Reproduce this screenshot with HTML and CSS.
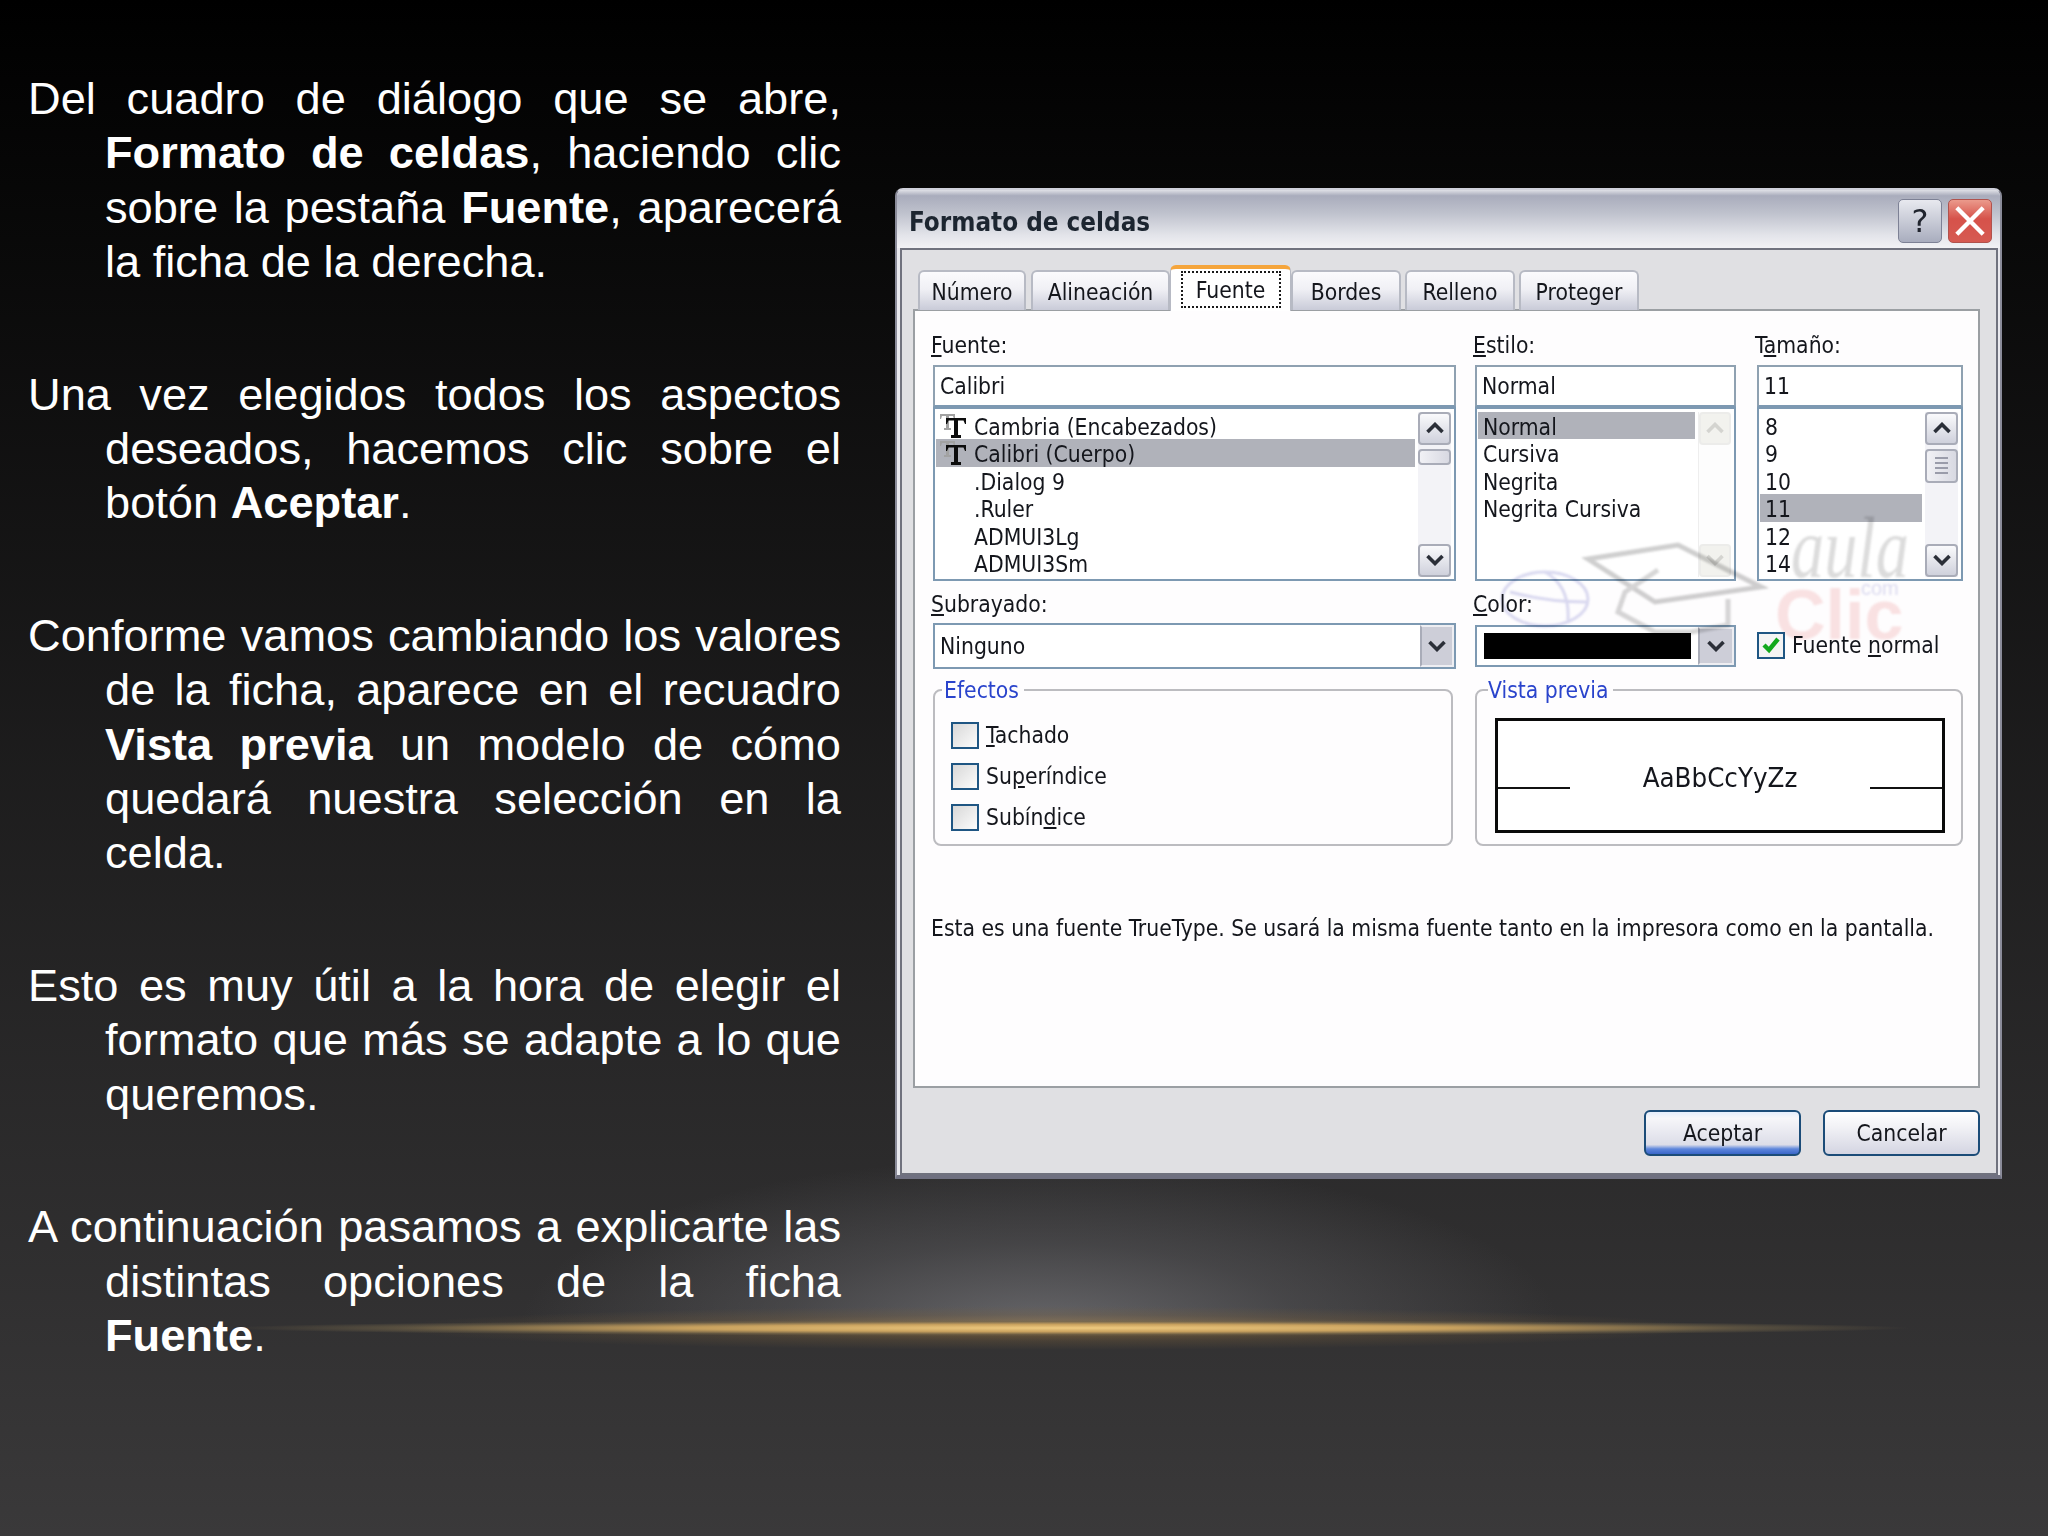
FILE: index.html
```html
<!DOCTYPE html>
<html lang="es">
<head>
<meta charset="utf-8">
<title>Formato de celdas</title>
<link rel="stylesheet" href="styles.css">
</head>
<body>
<svg class="defs" width="0" height="0" aria-hidden="true">
  <defs>
    <symbol id="chev-up" viewBox="0 0 18 12"><path d="M1.5 10 L9 2.5 L16.5 10" fill="none" stroke="currentColor" stroke-width="3.6"/></symbol>
    <symbol id="chev-down" viewBox="0 0 18 12"><path d="M1.5 2 L9 9.5 L16.5 2" fill="none" stroke="currentColor" stroke-width="3.6"/></symbol>
    <symbol id="tt" viewBox="0 0 27 30">
      <path d="M0 0 H15 V5 H14 L13 2 H9 V14 H11 V16 H4 V14 H6 V2 H2 L1 5 H0 Z" fill="#a2a2a2"/>
      <path d="M6 4 H26 V10 H25 L23.5 6.5 H18 V21 H21 V24 H11 V21 H14 V6.5 H8.5 L7 10 H6 Z" fill="#0c0c0c"/>
    </symbol>
  </defs>
</svg>
<main class="slide">
  <div class="glow-gray"></div>
  <div class="glow-halo"></div>
  <div class="glow-line"></div>

  <section class="copy">
    <p>Del cuadro de diálogo que se abre, <b>Formato de celdas</b>, haciendo clic sobre la pestaña <b>Fuente</b>, aparecerá la ficha de la derecha.</p>
    <p>Una vez elegidos todos los aspectos deseados, hacemos clic sobre el botón <b>Aceptar</b>.</p>
    <p>Conforme vamos cambiando los valores de la ficha, aparece en el recuadro <b>Vista previa</b> un modelo de cómo quedará nuestra selección en la celda.</p>
    <p>Esto es muy útil a la hora de elegir el formato que más se adapte a lo que queremos.</p>
    <p>A continuación pasamos a explicarte las distintas opciones de la ficha <b>Fuente</b>.</p>
  </section>

  <section class="dialog">
    <header class="titlebar">
      <h1 class="title">Formato de celdas</h1>
      <button class="cap cap-help">?</button>
      <button class="cap cap-close">
        <svg viewBox="0 0 30 30" width="36" height="36"><path d="M4 4 L26 26 M26 4 L4 26" stroke="#fff" stroke-width="3.6" fill="none"/></svg>
      </button>
    </header>

    <div class="client">
      <nav class="tabs">
        <span class="tab t-num">Número</span>
        <span class="tab t-ali">Alineación</span>
        <span class="tab tab-active"><span class="focus">Fuente</span></span>
        <span class="tab t-bor">Bordes</span>
        <span class="tab t-rel">Relleno</span>
        <span class="tab t-pro">Proteger</span>
      </nav>

      <div class="panel">
        <div class="grid">
          <div class="col">
            <label class="lbl"><u>F</u>uente:</label>
            <div class="input">Calibri</div>
            <div class="list">
              <ul class="items items-font">
                <li><svg class="tt"><use href="#tt"/></svg>Cambria (Encabezados)</li>
                <li class="sel"><svg class="tt"><use href="#tt"/></svg>Calibri (Cuerpo)</li>
                <li>.Dialog 9</li>
                <li>.Ruler</li>
                <li>ADMUI3Lg</li>
                <li>ADMUI3Sm</li>
              </ul>
              <div class="sb">
                <span class="sb-btn"><svg width="18" height="12"><use href="#chev-up"/></svg></span>
                <span class="sb-thumb sb-thumb-small"></span>
                <span class="sb-track"></span>
                <span class="sb-btn"><svg width="18" height="12"><use href="#chev-down"/></svg></span>
              </div>
            </div>
          </div>

          <div class="col">
            <label class="lbl"><u>E</u>stilo:</label>
            <div class="input">Normal</div>
            <div class="list">
              <ul class="items">
                <li class="sel">Normal</li>
                <li>Cursiva</li>
                <li>Negrita</li>
                <li>Negrita Cursiva</li>
              </ul>
              <div class="sb sb-off">
                <span class="sb-btn"><svg width="18" height="12"><use href="#chev-up"/></svg></span>
                <span class="sb-track"></span>
                <span class="sb-btn"><svg width="18" height="12"><use href="#chev-down"/></svg></span>
              </div>
            </div>
          </div>

          <div class="col">
            <label class="lbl">T<u>a</u>maño:</label>
            <div class="input">11</div>
            <div class="list">
              <ul class="items">
                <li>8</li>
                <li>9</li>
                <li>10</li>
                <li class="sel">11</li>
                <li>12</li>
                <li>14</li>
              </ul>
              <div class="sb">
                <span class="sb-btn"><svg width="18" height="12"><use href="#chev-up"/></svg></span>
                <span class="sb-thumb"><i></i><i></i><i></i><i></i></span>
                <span class="sb-track"></span>
                <span class="sb-btn"><svg width="18" height="12"><use href="#chev-down"/></svg></span>
              </div>
            </div>
          </div>

          <div class="col">
            <label class="lbl lbl2"><u>S</u>ubrayado:</label>
            <div class="select">
              <span class="select-text">Ninguno</span>
              <span class="drop"><svg width="18" height="12"><use href="#chev-down"/></svg></span>
            </div>
          </div>

          <div class="col">
            <label class="lbl lbl2"><u>C</u>olor:</label>
            <div class="select select-color">
              <span class="swatch"></span>
              <span class="drop"><svg width="18" height="12"><use href="#chev-down"/></svg></span>
            </div>
          </div>

          <div class="col col-end">
            <div class="check-row">
              <span class="box"><svg viewBox="0 0 20 20" width="20" height="20"><path d="M3 10 L8 15 L17 4" fill="none" stroke="#12a81c" stroke-width="4.4"/></svg></span>
              <span>Fuente <u>n</u>ormal</span>
            </div>
          </div>

          <fieldset class="group">
            <legend>Efectos</legend>
            <div class="check-row"><span class="box"></span><span><u>T</u>achado</span></div>
            <div class="check-row"><span class="box"></span><span>Su<u>p</u>eríndice</span></div>
            <div class="check-row"><span class="box"></span><span>Subín<u>d</u>ice</span></div>
          </fieldset>

          <fieldset class="group group-wide">
            <legend>Vista previa</legend>
            <div class="preview">
              <span class="rule"></span>
              <span class="sample">AaBbCcYyZz</span>
              <span class="rule"></span>
            </div>
          </fieldset>
        </div>

        <p class="note">Esta es una fuente TrueType. Se usará la misma fuente tanto en la impresora como en la pantalla.</p>

        <svg class="watermark" viewBox="0 0 340 150" width="340" height="150">
          <ellipse cx="47" cy="97" rx="43" ry="27" fill="none" stroke="#d9d9f0" stroke-width="3"/>
          <path d="M47 70 Q72 84 70 118 M12 90 Q50 100 88 100" fill="none" stroke="#d9d9f0" stroke-width="3"/>
          <path d="M90 57 L180 43 L263 85 L157 100 Z" fill="none" stroke="#cfcfcf" stroke-width="5"/>
          <path d="M160 68 L127 90 L120 110 L157 130 L193 130 L230 123 L230 97" fill="none" stroke="#d6d6d6" stroke-width="5"/>
          <text class="wm-aula" x="293" y="75" textLength="118" lengthAdjust="spacingAndGlyphs">aula</text>
          <text class="wm-clic" x="277" y="137">Clic</text>
          <text class="wm-com" x="363" y="93">com</text>
        </svg>
      </div>

      <div class="actions">
        <button class="btn btn-default">Aceptar</button>
        <button class="btn">Cancelar</button>
      </div>
    </div>
  </section>
</main>
</body>
</html>
```

FILE: styles.css
```css
* { box-sizing: border-box; }
html, body { margin: 0; padding: 0; }
body { width: 2048px; height: 1536px; overflow: hidden; background: #000; }
.defs { position: absolute; }

.slide {
  position: relative;
  width: 2048px;
  height: 1536px;
  overflow: hidden;
  display: flex;
  align-items: flex-start;
  padding-left: 28px;
  background: linear-gradient(180deg, #000 0%, #3a393a 100%);
  font-family: "Liberation Sans", Arial, sans-serif;
}

/* decorative horizon glow */
.glow-gray, .glow-halo, .glow-line { position: absolute; pointer-events: none; }
.glow-gray {
  left: 400px; top: 1150px; width: 1280px; height: 178px;
  background: radial-gradient(ellipse 520px 170px at 50% 100%, rgba(135,135,140,.62) 0%, rgba(120,120,125,.3) 50%, rgba(100,100,100,0) 100%);
}
.glow-halo {
  left: 300px; top: 1304px; width: 1500px; height: 48px;
  background: radial-gradient(ellipse 660px 22px at 50% 50%, rgba(170,130,70,.6) 0%, rgba(120,95,60,.3) 60%, rgba(80,70,50,0) 100%);
}
.glow-line {
  left: 220px; top: 1319px; width: 1700px; height: 18px;
  background: radial-gradient(ellipse 840px 8px at 50% 50%, #f0cb80 0%, #c9a25f 45%, rgba(120,105,75,.55) 80%, rgba(90,85,70,0) 100%);
}

/* left copy */
.copy {
  position: relative;
  width: 813px;
  flex: none;
  padding-top: 72px;
  color: #fff;
  font-size: 45.2px;
  line-height: 54.4px;
}
.copy p {
  margin: 0 0 78px;
  padding-left: 77px;
  text-indent: -77px;
  text-align: justify;
}
.copy b { font-weight: 700; }

/* dialog */
.dialog {
  position: relative;
  flex: none;
  width: 1107px;
  height: 991px;
  margin: 188px 0 0 54px;
  display: flex;
  flex-direction: column;
  background: #e9e9ee;
  border: 2px solid #8a8b99;
  border-top-color: #cfd0da;
  border-bottom: 4px solid #6f7080;
  border-radius: 8px 8px 0 0;
  font-family: "DejaVu Sans", "Noto Sans", sans-serif;
  font-stretch: condensed;
  font-size: 22.7px;
  color: #14161c;
  filter: blur(.45px);
}
.titlebar {
  flex: none;
  height: 58px;
  display: flex;
  align-items: flex-start;
  padding: 9px 8px 0 12px;
  background: linear-gradient(180deg, #dfe0e6 0%, #a9acbc 10%, #bfc2cd 40%, #e3e4ea 78%, #f2f2f5 100%);
  border-radius: 6px 6px 0 0;
}
.title {
  margin: 6px auto 0 0;
  font: 700 25.8px/34px "DejaVu Sans", sans-serif;
  font-stretch: condensed;
  color: #1c2530;
}
.cap {
  width: 44px;
  height: 44px;
  padding: 0;
  border: 1px solid #7d8195;
  border-radius: 5px;
  display: flex;
  align-items: center;
  justify-content: center;
}
.cap-help {
  margin-right: 6px;
  background: linear-gradient(180deg, #e8e9ef, #a9adbe);
  color: #20242e;
  font: 400 32px/1 "DejaVu Sans", sans-serif;
}
.cap-close {
  background: linear-gradient(180deg, #eb9a8c, #d6524a 45%, #d65a52);
  border-color: #b0524d;
}

.client {
  flex: 1;
  margin: 0 2px 0 3px;
  padding: 18.5px 16px 0 11px;
  background: #e0e0e3;
  border: 2px solid #70727e;
  display: flex;
  flex-direction: column;
}

.tabs { flex: none; display: flex; height: 41px; padding-left: 5px; align-items: flex-end; position: relative; z-index: 1; margin-bottom: -1px; }
.tab {
  height: 40px;
  display: flex;
  align-items: center;
  justify-content: center;
  padding-top: 3px;
  background: linear-gradient(180deg, #fbfbfd 0%, #f0f0f5 45%, #c9cbd8 100%);
  border: 2px solid #b7bac4;
  border-bottom: 0;
  border-radius: 6px 6px 0 0;
}
.t-num { width: 108px; margin-right: 5px; }
.t-ali { width: 139px; }
.t-bor { width: 110px; margin-right: 4px; }
.t-rel { width: 110px; margin-right: 4px; }
.t-pro { width: 120px; }
.tab-active {
  width: 121px;
  height: 46px;
  margin-bottom: -1px;
  padding-top: 0;
  background: #fff;
  border: 1px solid #b7bac4;
  border-top: 4px solid #f5a53c;
  border-bottom: 0;
}
.focus { width: 100px; height: 37px; display: flex; align-items: center; justify-content: center; border: 2px dotted #1a1a1a; }

.panel {
  position: relative;
  flex: none;
  height: 779.5px;
  padding: 22px 14px 0 18px;
  background: #fefdfe;
  border: 2px solid #9b9fa3;
}
.grid {
  display: grid;
  grid-template-columns: 523px 263px 206px;
  column-gap: 19px;
  grid-template-rows: 248px 88px auto;
}
.grid > :nth-child(3n+2) { margin-right: 2px; }
.col { display: flex; flex-direction: column; min-width: 0; }
.col-end { justify-content: flex-end; padding-bottom: 10px; }
.lbl { height: 32px; line-height: 25px; margin-left: -2px; }
.lbl2 { height: 42px; line-height: 46px; }
.input {
  height: 42px;
  line-height: 38px;
  padding-left: 5px;
  background: #fff;
  border: 2px solid #8fa1b1;
  border-bottom-color: #7d99b2;
}
.list {
  height: 174px;
  display: flex;
  background: #fff;
  border: 2px solid #7d99b2;
  padding: 3px 3px 2px 1px;
}
.items { flex: 1; list-style: none; margin: 0; padding: 0; min-width: 0; }
.items li {
  height: 27.5px;
  line-height: 27px;
  padding: 4px 0 0 5px;
  white-space: nowrap;
  display: flex;
  align-items: center;
}
.items-font li { padding-left: 38px; position: relative; }
.items .sel { background: #b0b2ba; }
.tt { position: absolute; left: 4px; top: 2px; width: 27px; height: 30px; }
.sb { flex: none; width: 33px; margin-left: 3px; display: flex; flex-direction: column; background: #f3f3f7; }
.sb-btn {
  flex: none;
  height: 33px;
  display: flex;
  align-items: center;
  justify-content: center;
  color: #2b2f38;
  background: linear-gradient(180deg, #fafafc, #cfd1dc);
  border: 2px solid #a9acb8;
  border-radius: 4px;
}
.sb-thumb {
  flex: none;
  height: 34px;
  margin-top: 4px;
  display: flex;
  flex-direction: column;
  gap: 3px;
  align-items: center;
  justify-content: center;
  background: linear-gradient(90deg, #f1f1f5, #d8d9e2);
  border: 2px solid #a9acb8;
  border-radius: 4px;
}
.sb-thumb i { width: 13px; height: 2px; background: #9a9caa; }
.sb-thumb-small { height: 16px; }
.sb-track { flex: 1; }
.sb-off { background: #fdfdfd; border-left: 1px solid #eeeeee; }
.sb-off .sb-btn { color: #d4d4d0; background: #f2f2ee; border-color: #ececea; }

.select {
  height: 46px;
  display: flex;
  align-items: center;
  background: #fff;
  border: 2px solid #7d99b2;
  padding-left: 5px;
}
.select-text { flex: 1; }
.select-color { height: 42px; padding-left: 7px; margin-top: 2px; }
.swatch { width: 209px; height: 26px; background: #000; margin-right: 7px; }
.drop {
  flex: none;
  width: 34px;
  height: 100%;
  display: flex;
  align-items: center;
  justify-content: center;
  color: #2b2f38;
  background: #cdced8;
  border: 2px solid #eeeef2;
  border-left-color: #a9acb8;
}
.select-color .drop { width: 36px; }

.check-row { display: flex; align-items: center; gap: 7px; height: 27px; }
.box {
  flex: none;
  width: 28px;
  height: 27px;
  display: flex;
  align-items: center;
  justify-content: center;
  border: 2px solid #1f5683;
  background: linear-gradient(135deg, #d8d8d8, #fcfcfc);
}
.col-end .box { background: #f4f4f4; }

.group {
  margin: 7px 3px 0 0;
  height: 170px;
  padding: 18px 0 0 16px;
  border: 2px solid #bcbcc0;
  border-radius: 8px;
  display: flex;
  flex-direction: column;
  gap: 14px;
  min-width: 0;
}
.group legend {
  height: 28px;
  line-height: 28px;
  padding: 0 5px 0 2px;
  margin-left: -9px;
  color: #2a44cc;
}
.grid > .group-wide { grid-column: 2 / 4; margin-right: 0; padding: 14px 0 0 18px; }
.group-wide legend { padding-left: 0; margin-left: -7px; }
.preview {
  width: 450px;
  height: 115px;
  display: flex;
  align-items: center;
  justify-content: space-between;
  border: 3px solid #0a0a0a;
  background: #fff;
}
.rule { width: 72px; height: 2px; background: #111; margin-top: 25px; }
.sample { font-size: 27.4px; padding-top: 5px; }

.note { margin: 68px 0 0 -2px; line-height: 28px; white-space: nowrap; }

.watermark { position: absolute; left: 583px; top: 191px; mix-blend-mode: multiply; overflow: visible; pointer-events: none; filter: blur(.8px); }
.wm-aula { font: italic 400 86px "Liberation Serif", serif; fill: #dcdcdc; }
.wm-com { font: 400 20px "Liberation Sans", sans-serif; fill: #dcdcf0; }
.wm-clic { font: 700 70px "Liberation Sans", sans-serif; fill: #fae3e3; }

.actions { flex: none; display: flex; justify-content: flex-end; gap: 22px; margin-top: 21.5px; }
.btn {
  width: 157px;
  height: 46px;
  padding: 0;
  font: inherit;
  font-stretch: condensed;
  color: #14161c;
  border: 2px solid #1b4c78;
  border-radius: 6px;
  background: linear-gradient(180deg, #ffffff 0%, #f2f2f6 35%, #d4d5e2 100%);
}
.btn-default {
  background: linear-gradient(180deg, #e4eefc 0%, #f6f6f9 15%, #dcdde8 78%, #5d86dc 88%, #3a66c8 100%);
}
```
